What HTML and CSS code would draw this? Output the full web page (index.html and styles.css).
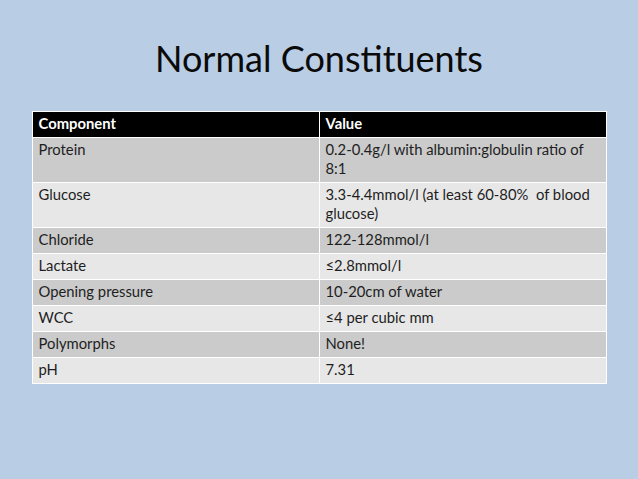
FILE: index.html
```html
<!DOCTYPE html>
<html>
<head>
<meta charset="utf-8">
<link rel="stylesheet" href="styles.css">
</head>
<body>
<div class="slide">
  <h1 class="title">Normal Constituents</h1>
  <table class="grid">
    <thead>
      <tr><th>Component</th><th>Value</th></tr>
    </thead>
    <tbody>
      <tr class="dark"><td>Protein</td><td>0.2-0.4g/l with albumin:globulin ratio of<br>8:1</td></tr>
      <tr class="light"><td>Glucose</td><td>3.3-4.4mmol/l (at least 60-80%&nbsp; of blood<br>glucose)</td></tr>
      <tr class="dark"><td>Chloride</td><td>122-128mmol/l</td></tr>
      <tr class="light"><td>Lactate</td><td>≤2.8mmol/l</td></tr>
      <tr class="dark"><td>Opening pressure</td><td>10-20cm of water</td></tr>
      <tr class="light"><td>WCC</td><td>≤4 per cubic mm</td></tr>
      <tr class="dark"><td>Polymorphs</td><td>None!</td></tr>
      <tr class="light"><td>pH</td><td>7.31</td></tr>
    </tbody>
  </table>
</div>
</body>
</html>
```
FILE: styles.css
```css
html, body {
  margin: 0;
  padding: 0;
}
body {
  background: #b9cde4;
  width: 638px;
  height: 479px;
  overflow: hidden;
  font-family: Lato, "Open Sans", sans-serif;
}
.slide {
  display: flex;
  flex-direction: column;
  align-items: center;
  padding-top: 33px;
}
.title {
  margin: 0;
  font-weight: normal;
  font-size: 36px;
  line-height: 50px;
  color: #0a0a0a;
  text-align: center;
}
.grid {
  margin-top: 28px;
  border-collapse: collapse;
  width: 575px;
  table-layout: fixed;
  font-size: 14.8px;
  line-height: 19px;
}
.grid th, .grid td {
  border: 1px solid #ffffff;
  padding: 2px 6px 4px;
  text-align: left;
  vertical-align: top;
  width: 50%;
}
.grid th {
  background: #000000;
  color: #ffffff;
  font-weight: bold;
}
.grid td {
  color: #1e1e1e;
}
.dark td {
  background: #cbcbcb;
}
.light td {
  background: #e7e7e7;
}
```
